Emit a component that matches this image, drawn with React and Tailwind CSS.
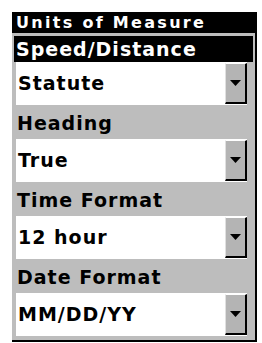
import React from 'react';

const font = { fontFamily: '"DejaVu Sans", Verdana, sans-serif' };

function Select({ value }) {
  return (
    <div className="ml-[4px] w-[231px] h-[43px] bg-white flex items-center">
      <span className="flex-1 pl-[2px] text-[19px] font-bold tracking-[1px] text-black leading-none">{value}</span>
      <div className="w-[22px] h-[41px] bg-[#b4b4b4] border-r-2 border-b-2 border-black border-t border-t-white border-l border-l-[#e0e0e0] flex items-center justify-center">
        <svg width="11" height="6" viewBox="0 0 11 6">
          <polygon points="0,0 11,0 5.5,6" fill="black" />
        </svg>
      </div>
    </div>
  );
}

function Label({ text }) {
  return (
    <div className="h-[34px] flex items-center pt-[2px] pl-[5px] text-[19px] font-bold tracking-[1px] text-black leading-none">
      {text}
    </div>
  );
}

export default function App() {
  return (
    <div className="w-[262px] h-[343px] bg-white pt-[12px] pl-[12px]" style={font}>
      <div className="w-[245px] h-[330px] bg-[#bdbdbd] border-r-2 border-b-2 border-black">
        <div className="h-[21px] bg-black text-white text-[16px] font-bold tracking-[2.3px] pl-[4px] flex items-center leading-none">
          Units of Measure
        </div>
        <div className="mt-[3px] mx-[2px] h-[26px] bg-black text-white text-[19px] font-bold tracking-[1px] pl-[2px] flex items-center leading-none">
          Speed/Distance
        </div>
        <Select value="Statute" />
        <Label text="Heading" />
        <Select value="True" />
        <Label text="Time Format" />
        <Select value="12 hour" />
        <Label text="Date Format" />
        <Select value="MM/DD/YY" />
      </div>
    </div>
  );
}
